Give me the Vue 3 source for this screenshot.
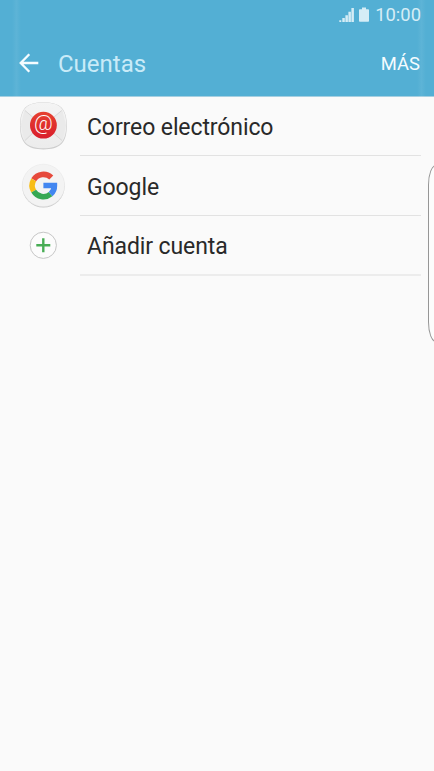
<template>
  <div class="screen">
    <header class="header">
      <div class="status-bar">
        <svg class="signal" viewBox="0 0 15 15">
          <path d="M0.3 15v-1.7h2V15zM3.3 15v-4h2.5V15zM6.4 15V8.3h2.5V15zM9.4 15V4.8h2.5v10.2zM12.4 15V1h2.5v14z"/>
        </svg>
        <svg class="battery" viewBox="0 0 10 15">
          <path d="M3 0.5h4v1.7h2.2q.8 0 .8.8v11q0 .8-.8.8H.8q-.8 0-.8-.8V3q0-.8.8-.8H3z"/>
        </svg>
        <span class="clock">10:00</span>
      </div>
      <div class="toolbar">
        <button class="back-btn" aria-label="Atrás">
          <svg viewBox="0 0 20 20" fill="none" stroke="currentColor" stroke-width="2.3">
            <path d="M10.3 1.3L1.7 10l8.6 8.7M2 10h17.3"/>
          </svg>
        </button>
        <h1>Cuentas</h1>
        <button class="more-btn">MÁS</button>
      </div>
    </header>

    <ul class="account-list">
      <li v-for="item in items" :key="item.id" class="account-row">
        <div class="account-icon">
          <svg v-if="item.id === 'email'" width="50" height="50" viewBox="0 0 50 50">
            <defs>
              <linearGradient id="paper" x1="0" y1="0" x2="0" y2="1">
                <stop offset="0" stop-color="#f4f4f4"/>
                <stop offset="1" stop-color="#ececec"/>
              </linearGradient>
              <linearGradient id="seal" x1="0" y1="0" x2="0" y2="1">
                <stop offset="0" stop-color="#e6402f"/>
                <stop offset="1" stop-color="#d91e2c"/>
              </linearGradient>
            </defs>
            <path d="M25.4 2.2C41.5 2.2 48.8 8 48.8 25.8S41.5 49.4 25.4 49.4S2 43.6 2 25.8S9.3 2.2 25.4 2.2z" fill="#cdcdcd"/>
            <path d="M25.4 2.6C41.2 2.6 48.3 8.3 48.3 25.3S41.2 48.3 25.4 48.3S2.5 42.3 2.5 25.3S9.6 2.6 25.4 2.6z" fill="url(#paper)"/>
            <path d="M6.5 10L25 26L44.3 10L48 25.3L44.3 41L32 30L25 35L18 30L6.5 41L2.8 25.3z" fill="#eaeaea"/>
            <path d="M7 10.5L25 26L43.8 10.5M7 40.5L18 30M44 40.5L32 30" fill="none" stroke="#d0d0d0" stroke-width="0.8"/>
            <circle cx="25.4" cy="25.2" r="13.4" fill="url(#seal)"/>
            <text x="25.4" y="30.4" text-anchor="middle" class="at-sign">@</text>
          </svg>
          <svg v-else-if="item.id === 'google'" width="50" height="50" viewBox="0 0 50 50">
            <circle cx="25.4" cy="26.3" r="21.2" fill="#c6c6c6"/>
            <circle cx="25.4" cy="25.4" r="21.2" fill="#f3f3f3" stroke="#e6e6e6" stroke-width="0.5"/>
            <g fill="none" stroke-width="5.6">
              <path d="M33.3 17.6A11.3 11.3 0 0 0 15.7 19.8" stroke="#e6493b"/>
              <path d="M15.7 19.8A11.3 11.3 0 0 0 15.7 31.2" stroke="#f8bd16"/>
              <path d="M15.7 31.2A11.3 11.3 0 0 0 32.6 34.2" stroke="#36a853"/>
              <path d="M32.6 34.2A11.3 11.3 0 0 0 36.4 25.5H25.4" stroke="#4286f0"/>
            </g>
          </svg>
          <svg v-else width="50" height="50" viewBox="0 0 50 50">
            <circle cx="25.3" cy="25.3" r="13.1" fill="#fcfcfc" stroke="#c6c6c6" stroke-width="1"/>
            <path d="M18.3 25.3h14M25.3 18.3v14" stroke="#48ad55" stroke-width="2.4"/>
          </svg>
        </div>
        <div class="account-label">{{ item.label }}</div>
      </li>
    </ul>

    <div class="edge-handle"></div>
    <div class="edge-shine left"></div>
    <div class="edge-shine right"></div>
  </div>
</template>

<script setup>
const items = [
  { id: 'email', label: 'Correo electrónico' },
  { id: 'google', label: 'Google' },
  { id: 'add', label: 'Añadir cuenta' }
]
</script>

<style>
body {
  margin: 0;
  background: #fafafa;
}
</style>

<style scoped>
.screen {
  position: relative;
  height: 771px;
  overflow: hidden;
  background: #fafafa;
  color: #292929;
  font-family: Roboto, "Liberation Sans", sans-serif;
}

.header {
  height: 97px;
  box-sizing: border-box;
  background: #53afd4;
  border-bottom: 1px solid #a5cfe1;
}

.status-bar {
  display: flex;
  align-items: center;
  justify-content: flex-end;
  height: 30px;
  padding-right: 13px;
  color: #d5edf6;
}

.status-bar svg {
  height: 15px;
  margin-bottom: 1px;
  fill: currentColor;
}

.signal {
  width: 15px;
  margin-right: 5px;
}

.battery {
  width: 10px;
  margin-right: 6px;
}

.clock {
  font-size: 18.4px;
  line-height: 30px;
}

.toolbar {
  display: flex;
  align-items: center;
  height: 66px;
  padding: 0 14px 0 19px;
}

.back-btn,
.more-btn {
  padding: 0;
  border: none;
  background: none;
  color: #f5fcff;
  font-family: inherit;
  cursor: pointer;
}

.back-btn {
  width: 20px;
  height: 20px;
}

.back-btn svg {
  display: block;
  width: 20px;
  height: 20px;
}

h1 {
  flex: 1;
  margin: 1px 0 0 19px;
  font-size: 24px;
  font-weight: 400;
  line-height: 30px;
  color: #c9ebf8;
}

.more-btn {
  font-size: 18.4px;
}

.account-list {
  margin: 0;
  padding: 0;
  list-style: none;
}

.account-row {
  display: flex;
  height: 60px;
}

.account-row:first-child {
  height: 59px;
}

.account-icon {
  display: flex;
  align-items: center;
  width: 62px;
  padding: 0 0 2px 18px;
}

.account-row:first-child .account-icon {
  padding-bottom: 4px;
}

.at-sign {
  font-size: 20.5px;
  font-weight: 300;
  fill: #fff;
}

.account-label {
  flex: 1;
  display: flex;
  align-items: center;
  margin-right: 13px;
  padding: 3px 0 0 7px;
  border-bottom: 1px solid #e2e2e2;
  font-size: 23px;
  letter-spacing: -0.1px;
}

.account-row:last-child .account-label {
  padding-top: 2px;
  border-bottom: 2px solid #ececec;
}

.edge-handle {
  position: absolute;
  top: 165px;
  right: -10px;
  width: 14px;
  height: 175px;
  border: 1px solid #969696;
  border-radius: 12px / 30px;
  background: #fcfcfc;
}

.edge-shine {
  position: absolute;
  top: 0;
  bottom: 0;
  width: 9px;
  background: linear-gradient(90deg, transparent, rgba(255, 255, 255, 0.06), transparent);
}

.edge-shine.left {
  left: 12px;
}

.edge-shine.right {
  right: 8px;
}
</style>
